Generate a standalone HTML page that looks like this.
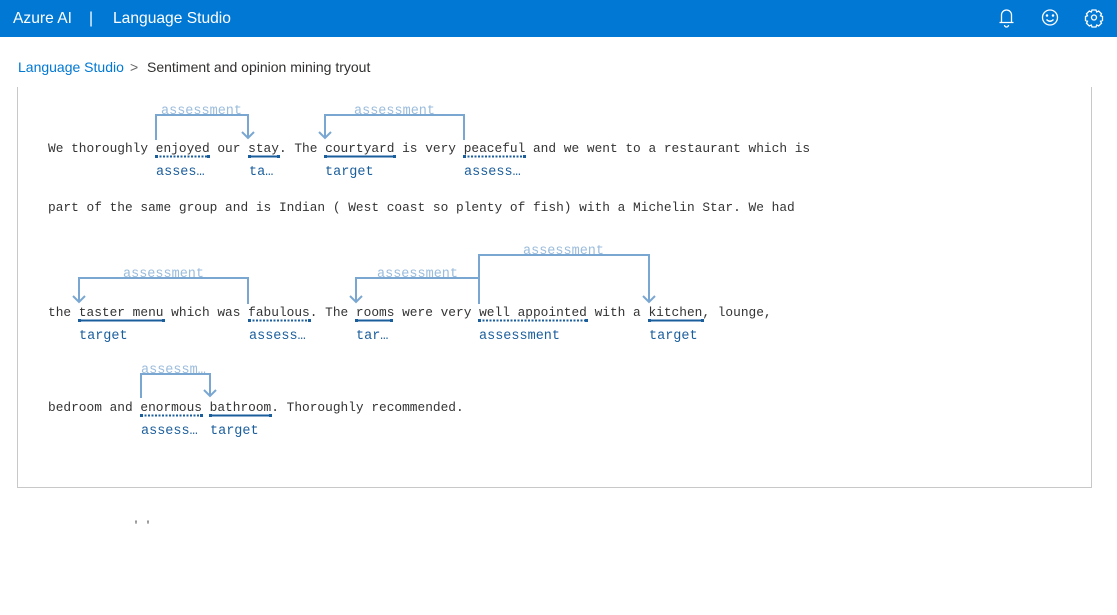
<!DOCTYPE html>
<html><head><meta charset="utf-8"><style>
body{margin:0;width:1117px;height:615px;background:#fff;overflow:hidden;font-family:"Liberation Sans",sans-serif;position:relative}
.top{position:absolute;left:0;top:0;width:1117px;height:37px;background:#0078d4;color:#fff;font-size:15.6px}
.top span{position:absolute;top:10px}
.bc{position:absolute;top:59px;font-size:14px}
.box{position:absolute;left:17px;top:87px;width:1073px;height:400px;border:1px solid #c8c8c8;border-top:none}
svg{position:absolute;left:0;top:0}
</style></head><body>
<div class="top"><span style="left:13px">Azure AI</span><span style="left:89px">|</span><span style="left:113px">Language Studio</span>
<svg width="1117" height="37" style="left:0;top:0" fill="none" stroke="#fff" stroke-width="1.3">
<path d="M1001.5 22 V15 a5 5 0 0 1 10 0 V22 M999.5 22.5 h14 M1004.5 25 a2 2 0 0 0 4 0"/>
<circle cx="1050" cy="17.5" r="7.5"/><circle cx="1047" cy="15.5" r=".6" fill="#fff"/><circle cx="1053" cy="15.5" r=".6" fill="#fff"/><path d="M1046.5 19.5 q3.5 3.5 7 0"/>
<circle cx="1094" cy="17.5" r="2.5"/><path d="M1092 10 h4 l.7 2 2-1 2.8 2.8-1 2 2 .7 v4 l-2 .7 1 2-2.8 2.8-2-1-.7 2 h-4 l-.7-2-2 1-2.8-2.8 1-2-2-.7 v-4 l2-.7-1-2 2.8-2.8 2 1z"/>
</svg></div>
<div class="bc" style="left:18px;color:#0078d4">Language Studio</div>
<div class="bc" style="left:130px;color:#666">&gt;</div>
<div class="bc" style="left:147px;color:#323130">Sentiment and opinion mining tryout</div>
<div class="box"></div>
<svg width="1117" height="615" font-family="Liberation Mono, monospace" font-size="12.83">
<g fill="#333">
<text x="48" y="152">We thoroughly enjoyed our stay. The courtyard is very peaceful and we went to a restaurant which is</text>
<text x="48" y="211">part of the same group and is Indian ( West coast so plenty of fish) with a Michelin Star. We had</text>
<text x="48" y="316">the taster menu which was fabulous. The rooms were very well appointed with a kitchen, lounge,</text>
<text x="48" y="411">bedroom and enormous bathroom. Thoroughly recommended.</text>
<text x="133" y="528" font-size="10">' '</text>
</g>
<g fill="none" stroke="#7aa7d1" stroke-width="2">
<path d="M156 140 V115 H248 V138 M242 132 l6 6 6-6"/>
<path d="M464 140 V115 H325 V138 M319 132 l6 6 6-6"/>
<path d="M248 304 V278 H79 V302 M73 296 l6 6 6-6"/>
<path d="M479 304 V278 H356 V302 M350 296 l6 6 6-6"/>
<path d="M479 304 V255 H649 V302 M643 296 l6 6 6-6"/>
<path d="M141 398 V374 H210 V396 M204 390 l6 6 6-6"/>
</g>
<g fill="#9bbcdc" font-size="13.5">
<text x="161" y="114">assessment</text><text x="354" y="114">assessment</text>
<text x="123" y="277">assessment</text><text x="377" y="277">assessment</text>
<text x="523" y="254">assessment</text><text x="141" y="373">assessm…</text>
</g>
<g stroke="#1b5e9c" stroke-width="2" fill="#1b5e9c">
<path d="M156 156.5 H209" stroke-dasharray="2 1.5"/><path d="M249 156.5 H279"/><path d="M325 156.5 H395"/><path d="M464 156.5 H525" stroke-dasharray="2 1.5"/>
<path d="M79 320.5 H164"/><path d="M249 320.5 H310" stroke-dasharray="2 1.5"/><path d="M356 320.5 H392"/><path d="M479 320.5 H587" stroke-dasharray="2 1.5"/><path d="M649 320.5 H703"/>
<path d="M141 415.5 H202" stroke-dasharray="2 1.5"/><path d="M210 415.5 H271"/>
</g>
<g fill="#1b5e9c" font-size="13.5">
<rect x="155" y="155" width="3" height="3"/><rect x="207" y="155" width="3" height="3"/><rect x="248" y="155" width="3" height="3"/><rect x="277" y="155" width="3" height="3"/><rect x="324" y="155" width="3" height="3"/><rect x="393" y="155" width="3" height="3"/><rect x="463" y="155" width="3" height="3"/><rect x="523" y="155" width="3" height="3"/>
<rect x="78" y="319" width="3" height="3"/><rect x="162" y="319" width="3" height="3"/><rect x="248" y="319" width="3" height="3"/><rect x="308" y="319" width="3" height="3"/><rect x="355" y="319" width="3" height="3"/><rect x="390" y="319" width="3" height="3"/><rect x="478" y="319" width="3" height="3"/><rect x="585" y="319" width="3" height="3"/><rect x="648" y="319" width="3" height="3"/><rect x="701" y="319" width="3" height="3"/>
<rect x="140" y="414" width="3" height="3"/><rect x="200" y="414" width="3" height="3"/><rect x="209" y="414" width="3" height="3"/><rect x="269" y="414" width="3" height="3"/>
<text x="156" y="175">asses…</text><text x="249" y="175">ta…</text><text x="325" y="175">target</text><text x="464" y="175">assess…</text>
<text x="79" y="339">target</text><text x="249" y="339">assess…</text><text x="356" y="339">tar…</text><text x="479" y="339">assessment</text><text x="649" y="339">target</text>
<text x="141" y="434">assess…</text><text x="210" y="434">target</text>
</g>
</svg>
</body></html>
